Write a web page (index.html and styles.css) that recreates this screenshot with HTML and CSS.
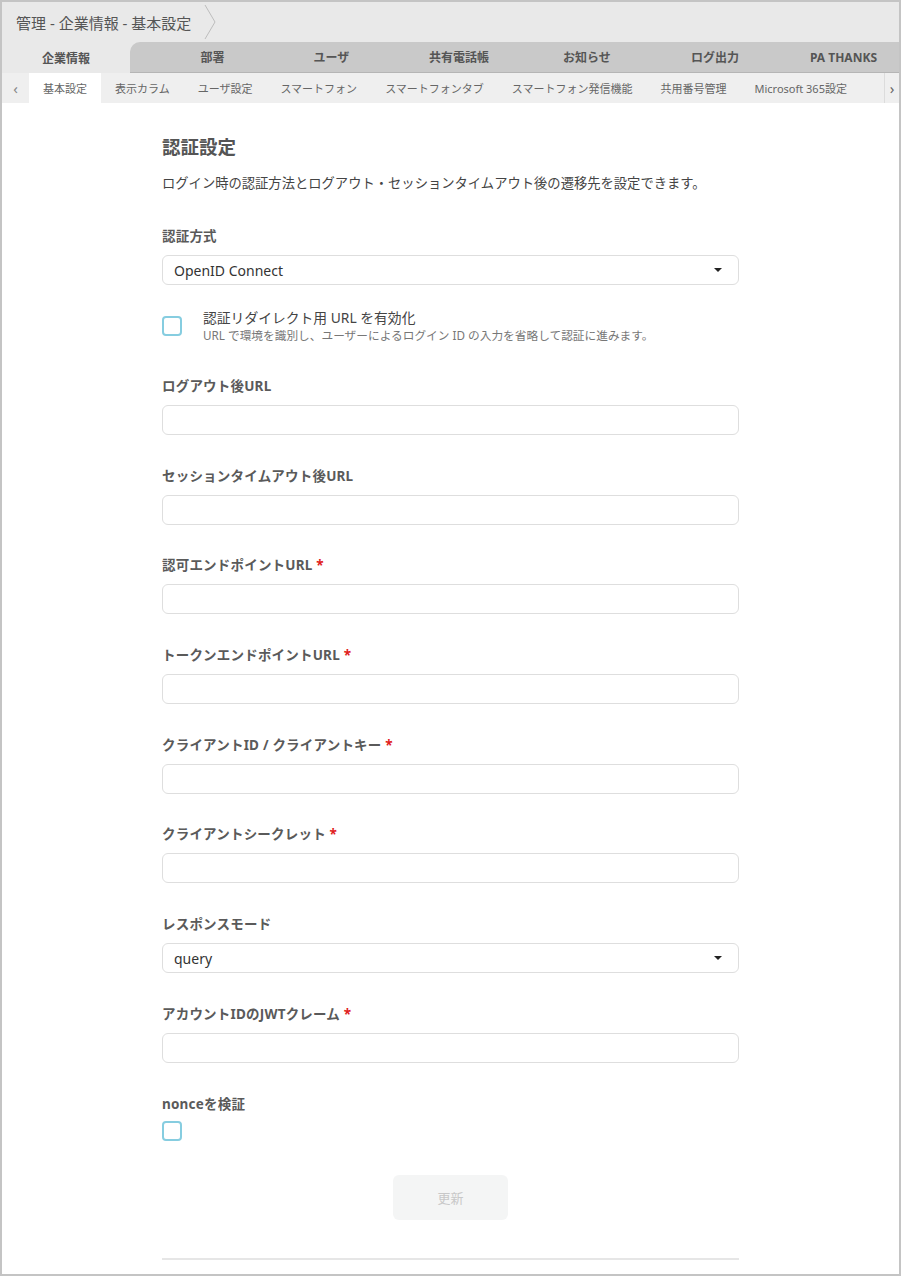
FILE: index.html
```html
<!DOCTYPE html>
<html lang="ja">
<head>
    <meta charset="UTF-8">
    <title>管理 - 企業情報 - 基本設定</title>
    <link rel="stylesheet" href="styles.css">
</head>
<body>

<div id="frame">
    <header class="breadcrumb">
        <span class="crumb">管理 - 企業情報 - 基本設定</span>
        <svg class="chevron" width="14" height="42" viewBox="0 0 14 42">
            <polyline points="2,4 12,21 2,38" fill="none" stroke="#bdbdbd" stroke-width="1"/>
        </svg>
    </header>

    <nav class="maintabs">
        <a href="#" class="maintab active">企業情報</a>
        <div class="rest">
            <a href="#" class="maintab">部署</a>
            <a href="#" class="maintab">ユーザ</a>
            <a href="#" class="maintab">共有電話帳</a>
            <a href="#" class="maintab">お知らせ</a>
            <a href="#" class="maintab">ログ出力</a>
            <a href="#" class="maintab">PA THANKS</a>
        </div>
    </nav>

    <nav class="subtabs">
        <span class="arrow left">&lsaquo;</span>
        <ul class="sublist">
            <li class="active">基本設定</li>
            <li>表示カラム</li>
            <li>ユーザ設定</li>
            <li>スマートフォン</li>
            <li>スマートフォンタブ</li>
            <li>スマートフォン発信機能</li>
            <li>共用番号管理</li>
            <li>Microsoft 365設定</li>
        </ul>
        <span class="arrow right">&rsaquo;</span>
    </nav>

    <main class="content">
        <h2 class="title">認証設定</h2>
        <p class="desc">ログイン時の認証方法とログアウト・セッションタイムアウト後の遷移先を設定できます。</p>

        <div class="field first">
            <label class="label">認証方式</label>
            <div class="select"><span>OpenID Connect</span><i class="caret"></i></div>
        </div>

        <div class="checkrow">
            <span class="box"></span>
            <div>
                <div class="checktitle">認証リダイレクト用 URL を有効化</div>
                <div class="checknote">URL で環境を識別し、ユーザーによるログイン ID の入力を省略して認証に進みます。</div>
            </div>
        </div>

        <div class="field">
            <label class="label">ログアウト後URL</label>
            <div class="input"></div>
        </div>
        <div class="field">
            <label class="label">セッションタイムアウト後URL</label>
            <div class="input"></div>
        </div>
        <div class="field">
            <label class="label">認可エンドポイントURL <em>*</em></label>
            <div class="input"></div>
        </div>
        <div class="field">
            <label class="label">トークンエンドポイントURL <em>*</em></label>
            <div class="input"></div>
        </div>
        <div class="field">
            <label class="label">クライアントID / クライアントキー <em>*</em></label>
            <div class="input"></div>
        </div>
        <div class="field">
            <label class="label">クライアントシークレット <em>*</em></label>
            <div class="input"></div>
        </div>
        <div class="field">
            <label class="label">レスポンスモード</label>
            <div class="select"><span>query</span><i class="caret"></i></div>
        </div>
        <div class="field">
            <label class="label">アカウントIDのJWTクレーム <em>*</em></label>
            <div class="input"></div>
        </div>
        <div class="field nonce">
            <label class="label">nonceを検証</label>
            <span class="box"></span>
        </div>

        <div class="actions">
            <button class="update" disabled>更新</button>
        </div>
        <hr class="rule">
    </main>
</div>

</body>
</html>
```

FILE: styles.css
```css
html, body {
    margin: 0;
    padding: 0;
    background: white;
    font-family: "Noto Sans", "Noto Sans CJK JP", sans-serif;
    color: #555;
}

#frame {
    box-sizing: border-box;
    width: 901px;
    height: 1276px;
    border: 2px solid #c4c4c4;
    overflow: hidden;
}

/* パンくず */
.breadcrumb {
    display: flex;
    align-items: center;
    height: 40px;
    background: #e9e9e9;
    padding-left: 14px;
}

.crumb {
    font-size: 15px;
    color: #555;
    margin-right: 12px;
}

.chevron {
    display: block;
}

/* メインタブ */
.maintabs {
    display: flex;
    height: 31px;
    background: #e9e9e9;
}

.maintab {
    display: flex;
    align-items: center;
    justify-content: center;
    font-size: 12px;
    font-weight: bold;
    color: #555;
    text-decoration: none;
}

.maintab.active {
    width: 128px;
}

.rest {
    flex: 1;
    display: flex;
    background: #c9c9c9;
    border-top-left-radius: 10px;
    border-bottom: 1px solid #b5b5b5;
}

.rest .maintab:nth-child(1) { width: 139px; padding-left: 26px; box-sizing: border-box; }
.rest .maintab:nth-child(2) { width: 125px; }
.rest .maintab:nth-child(3) { width: 130px; }
.rest .maintab:nth-child(4) { width: 126px; }
.rest .maintab:nth-child(5) { width: 130px; }
.rest .maintab:nth-child(6) { flex: 1; padding-left: 8px; }

/* サブタブ */
.subtabs {
    display: flex;
    height: 30px;
    background: #efefef;
    font-size: 11px;
    color: #666;
}

.arrow {
    display: flex;
    align-items: center;
    justify-content: center;
    font-size: 15px;
    color: #888;
}

.arrow.left {
    width: 27px;
}

.arrow.right {
    width: 14px;
    border-left: 1px solid #dcdcdc;
    color: #666;
}

.sublist {
    flex: 1;
    display: flex;
    margin: 0;
    padding: 0;
    list-style: none;
    overflow: hidden;
    white-space: nowrap;
}

.sublist li {
    display: flex;
    align-items: center;
    padding: 0 14px;
    flex-shrink: 0;
}

.sublist li.active {
    background: white;
}

/* フォーム */
.content {
    width: 577px;
    margin: 0 auto;
    padding-top: 33px;
}

.title {
    margin: 0;
    font-size: 18.5px;
    font-weight: 600;
    line-height: 22px;
    color: #555;
}

.desc {
    margin: 15px 0 0 0;
    font-size: 13.3px;
    line-height: 20px;
    color: #444;
}

.field {
    margin-bottom: 31.7px;
}

.field.first {
    margin-top: 34px;
    margin-bottom: 0;
}

.label {
    display: block;
    font-size: 13.5px;
    letter-spacing: 0.2px;
    font-weight: bold;
    line-height: 18px;
    margin-bottom: 10px;
    color: #5a5a5a;
}

.label em {
    font-style: normal;
    color: #e02020;
}

.input, .select {
    box-sizing: border-box;
    height: 30px;
    border: 1px solid #dedede;
    border-radius: 6px;
    background: white;
}

.select {
    display: flex;
    align-items: center;
    justify-content: space-between;
    padding: 0 16px 0 11px;
    font-size: 14px;
    color: #333;
}

.caret {
    width: 0;
    height: 0;
    border-left: 4px solid transparent;
    border-right: 4px solid transparent;
    border-top: 4px solid #222;
}

.box {
    display: block;
    box-sizing: border-box;
    width: 20px;
    height: 20px;
    border: 2px solid #86cde0;
    border-radius: 4px;
    flex-shrink: 0;
}

.checkrow {
    display: flex;
    align-items: center;
    gap: 21px;
    margin-top: 24px;
    margin-bottom: 34px;
}

.checktitle {
    font-size: 13.8px;
    line-height: 18px;
    color: #444;
}

.checknote {
    font-size: 11.7px;
    line-height: 16px;
    color: #777;
}

.nonce .label {
    margin-bottom: 8px;
}

.actions {
    display: flex;
    justify-content: center;
    margin-top: 34px;
}

.update {
    width: 115px;
    height: 45px;
    border: none;
    border-radius: 6px;
    background: #f4f5f5;
    color: #c8c8c8;
    font-family: inherit;
    font-size: 13px;
}

.rule {
    margin: 38px 0 0 0;
    border: none;
    border-top: 2px solid #e6e6e6;
}
```
